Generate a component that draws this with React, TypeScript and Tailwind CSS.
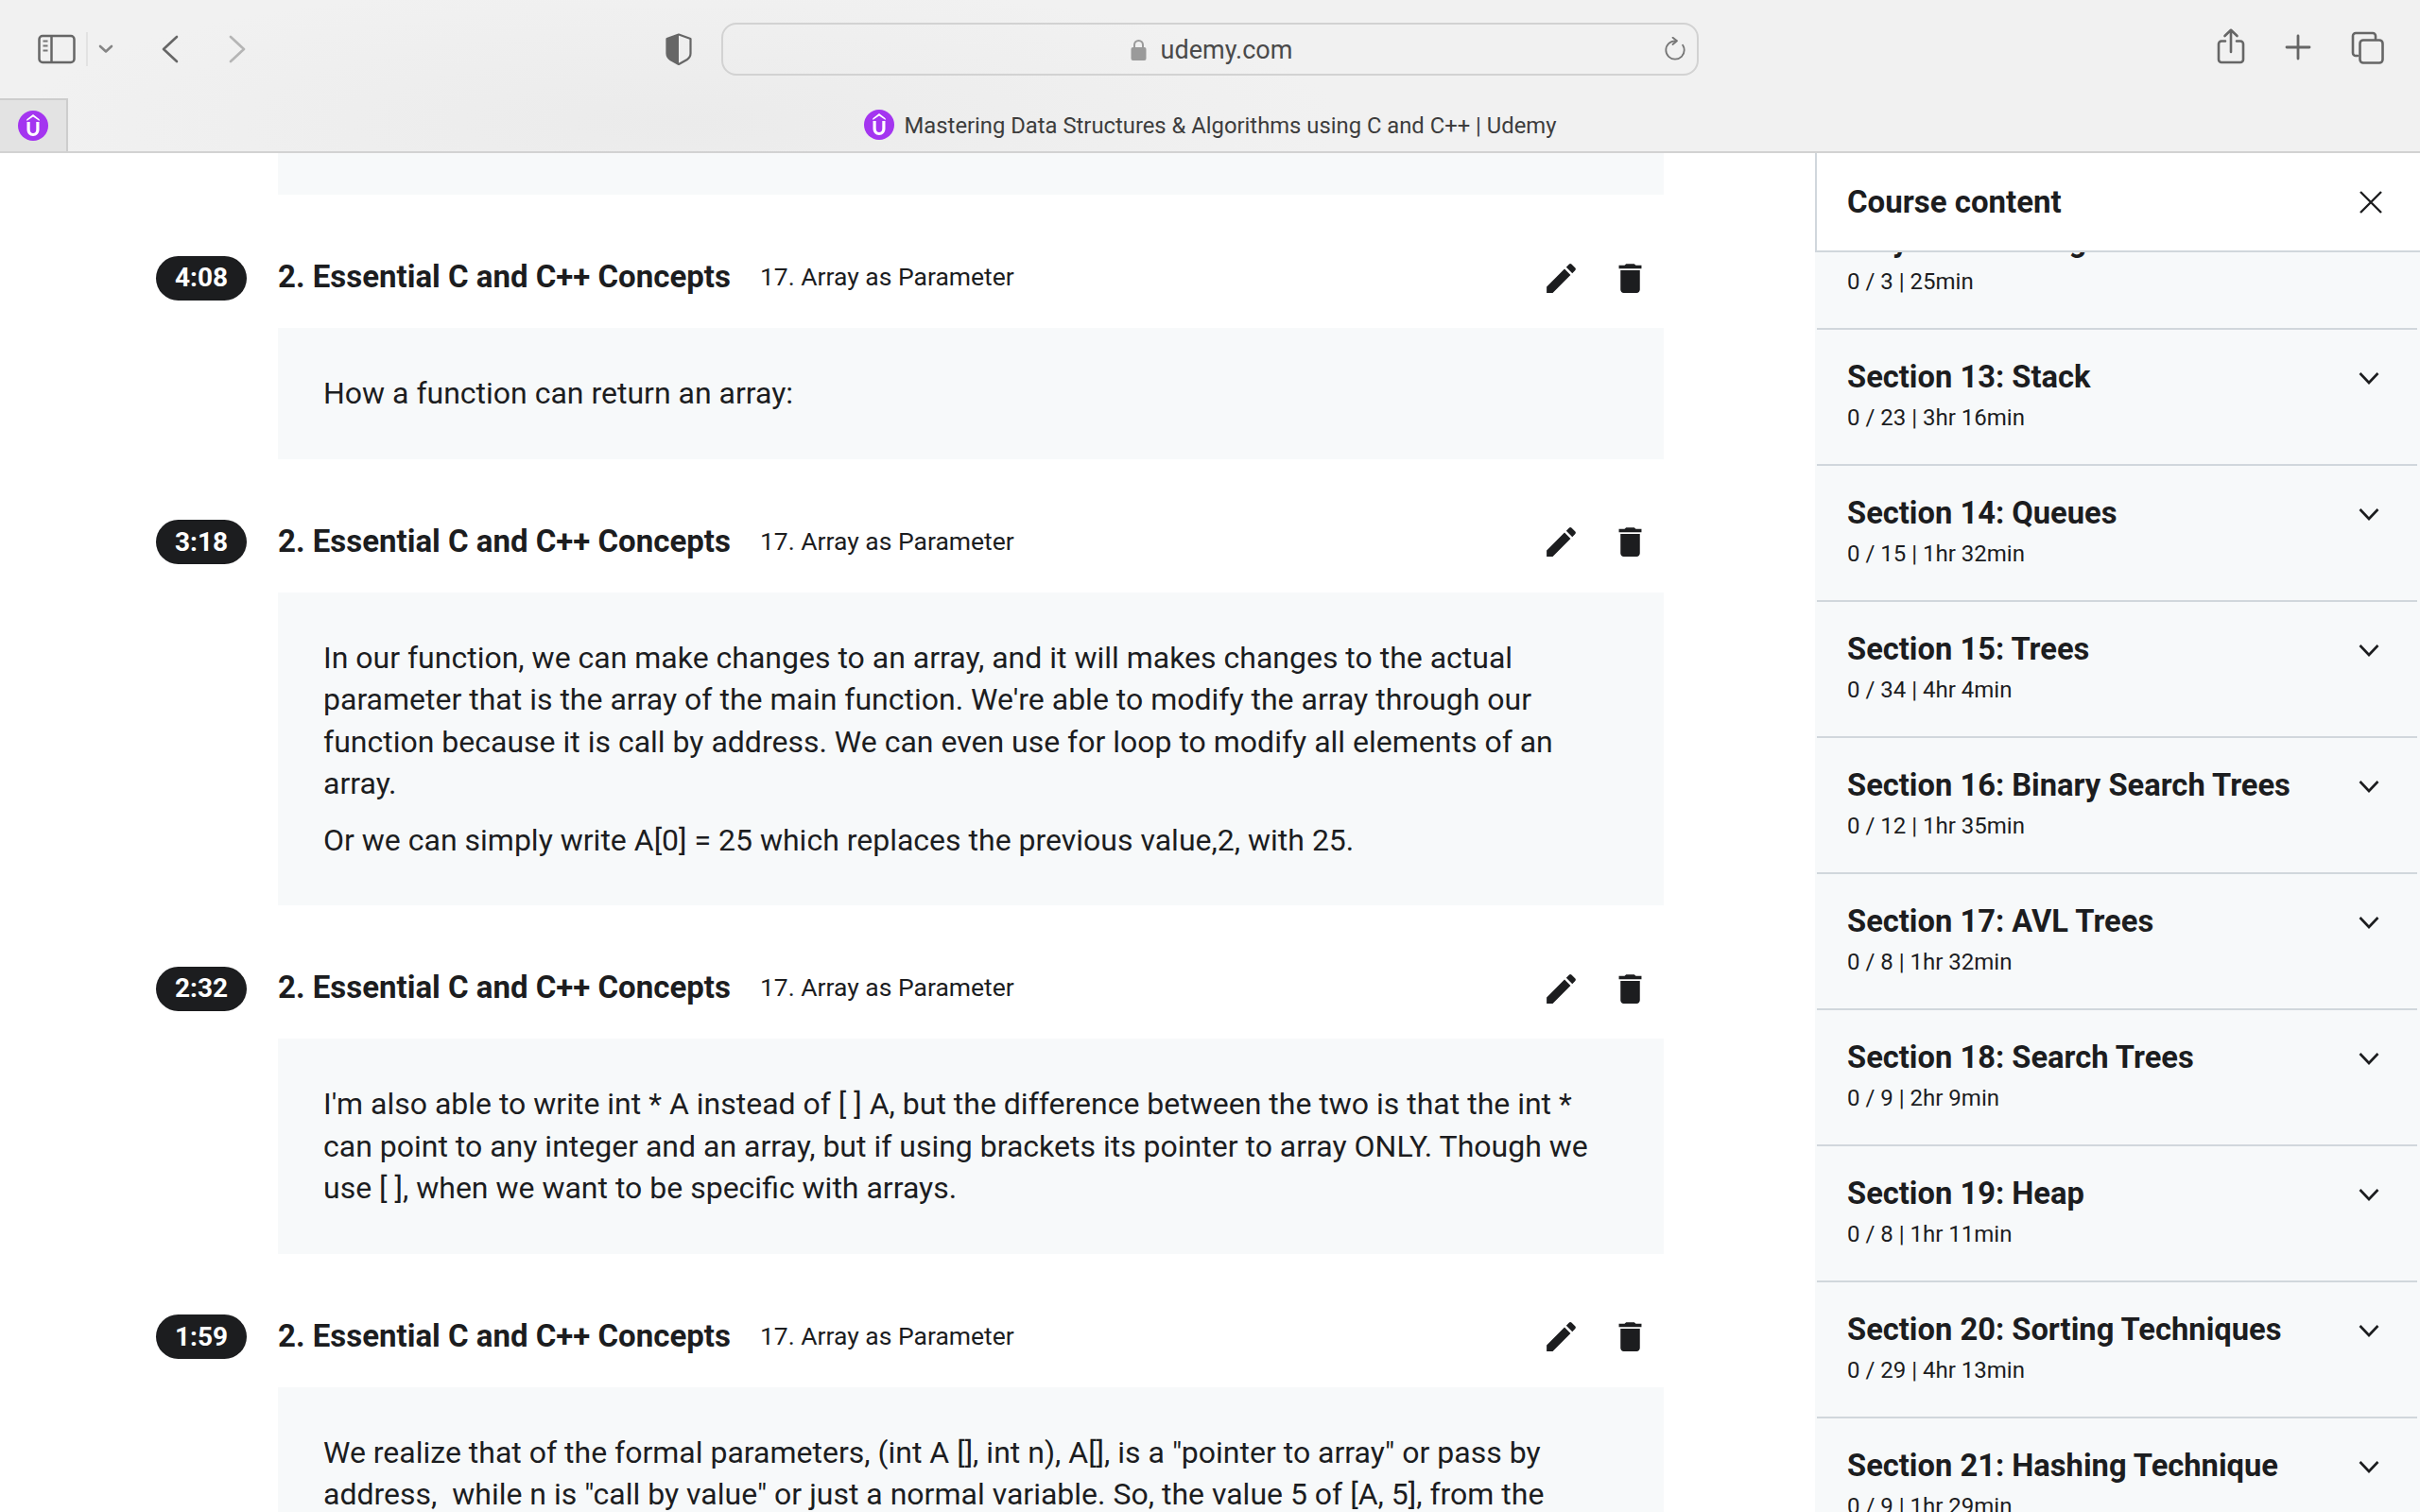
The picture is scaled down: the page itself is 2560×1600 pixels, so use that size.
const textFont = "font-['Roboto','Liberation_Sans',sans-serif]";

const notes = [
  {
    time: '4:08',
    paragraphs: ['How a function can return an array:'],
  },
  {
    time: '3:18',
    paragraphs: [
      "In our function, we can make changes to an array, and it will makes changes to the actual parameter that is the array of the main function. We're able to modify the array through our function because it is call by address. We can even use for loop to modify all elements of an array.",
      'Or we can simply write A[0] = 25 which replaces the previous value,2, with 25.',
    ],
  },
  {
    time: '2:32',
    paragraphs: [
      "I'm also able to write int * A instead of [ ] A, but the difference between the two is that the int * can point to any integer and an array, but if using brackets its pointer to array ONLY. Though we use [ ], when we want to be specific with arrays.",
    ],
  },
  {
    time: '1:59',
    paragraphs: [
      'We realize that of the formal parameters, (int A [], int n), A[], is a "pointer to array" or pass by\naddress,\u00a0 while n is "call by value" or just a normal variable. So, the value 5 of [A, 5], from the\nmain function is copied into n of the function.',
    ],
  },
];

const sections = [
  { title: 'Section 13: Stack', meta: '0 / 23 | 3hr 16min' },
  { title: 'Section 14: Queues', meta: '0 / 15 | 1hr 32min' },
  { title: 'Section 15: Trees', meta: '0 / 34 | 4hr 4min' },
  { title: 'Section 16: Binary Search Trees', meta: '0 / 12 | 1hr 35min' },
  { title: 'Section 17: AVL Trees', meta: '0 / 8 | 1hr 32min' },
  { title: 'Section 18: Search Trees', meta: '0 / 9 | 2hr 9min' },
  { title: 'Section 19: Heap', meta: '0 / 8 | 1hr 11min' },
  { title: 'Section 20: Sorting Techniques', meta: '0 / 29 | 4hr 13min' },
  { title: 'Section 21: Hashing Technique', meta: '0 / 9 | 1hr 29min' },
];

function Favicon() {
  return (
    <svg width="32" height="32" viewBox="0 0 32 32" className="shrink-0">
      <circle cx="16" cy="16" r="16" fill="#a435f0" />
      <path d="M9.3 9.200 16 4l6.700 5.200v1.800L16 6.600l-6.700 4.400z" fill="#fff" />
      <path d="M9.500 12v8c0 4 2.700 7 6.500 7s6.500-3 6.500-7v-8h-3.200v8c0 2.400-1.300 4-3.300 4s-3.300-1.600-3.300-4v-8z" fill="#fff" />
    </svg>
  );
}

function BrowserChrome() {
  return (
    <header className="h-[162px] shrink-0 border-b-2 border-[#d2d2d2] bg-[radial-gradient(ellipse_700px_150px_at_720px_130px,#ebebeb,#f1f1f1)]">
      <div className="flex h-[104px] items-start pt-[24px]">
        <div className="flex h-[56px] w-[763px] shrink-0 items-center">
          <svg width="40" height="32" viewBox="0 0 40 32" fill="none" className="ml-[40px]">
            <rect x="1.500" y="2" width="37" height="28" rx="3.500" stroke="#666" strokeWidth="2.500" />
            <path d="M14.500 2v28" stroke="#666" strokeWidth="2.500" />
            <path d="M5.500 7.500h5M5.500 12.500h5M5.500 17.500h5" stroke="#777" strokeWidth="2" />
          </svg>
          <div className="ml-[11px] h-[36px] w-[2px] bg-[#e2e2e2]" />
          <svg width="16" height="10" viewBox="0 0 16 10" fill="none" className="ml-[11px]">
            <path d="M2 2l6 5.500L14 2" stroke="#858585" strokeWidth="2.600" strokeLinecap="round" strokeLinejoin="round" />
          </svg>
          <svg width="20" height="30" viewBox="0 0 20 30" fill="none" className="ml-[50px]">
            <path d="M17 2 3 15l14 13" stroke="#666" strokeWidth="2.600" strokeLinecap="round" strokeLinejoin="round" />
          </svg>
          <svg width="20" height="30" viewBox="0 0 20 30" fill="none" className="ml-[51px]">
            <path d="M3 2l14 13L3 28" stroke="#b5b5b5" strokeWidth="2.600" strokeLinecap="round" strokeLinejoin="round" />
          </svg>
          <svg width="28" height="34" viewBox="0 0 28 34" fill="none" className="ml-[443px]">
            <path d="M14 1.500 26.500 6v15.500c0 3-1.500 5-4 6.800L14 33l-8.500-4.700c-2.500-1.800-4-3.800-4-6.800V6z" stroke="#666" strokeWidth="2.200" strokeLinejoin="round" />
            <path d="M14 1.500V33l-8.500-4.700c-2.500-1.800-4-3.800-4-6.800V6z" fill="#666" />
          </svg>
        </div>
        <div className="relative flex h-[56px] w-[1034px] shrink-0 items-center justify-center rounded-[16px] border-2 border-[#d2d2d2] pl-[3px]">
          <svg width="17" height="23" viewBox="0 0 17 23" fill="none">
            <path d="M4 10V6.500a4.500 4.500 0 0 1 9 0V10" stroke="#9a9a9a" strokeWidth="2" />
            <rect x="0.500" y="9" width="16" height="14" rx="2" fill="#9a9a9a" />
          </svg>
          <span className="ml-[15px] pt-[1px] text-[27px] leading-[32px] text-[#4a4a4a]">udemy.com</span>
          <svg width="24" height="25" viewBox="0 0 24 25" fill="none" className="absolute right-[11px] top-[13px]">
            <path d="M12 4.300a9.700 9.700 0 1 0 9.700 9.700c0-2-.6-3.800-1.600-5.300" stroke="#757575" strokeWidth="1.800" strokeLinecap="round" />
            <path d="M9.500.8l4.500 3.500-4.500 3.700" stroke="#757575" strokeWidth="1.800" strokeLinecap="round" strokeLinejoin="round" />
          </svg>
        </div>
        <div className="flex h-[56px] flex-1 items-center">
          <svg width="30" height="38" viewBox="0 0 30 38" fill="none" className="ml-[548px] -translate-y-[3px]">
            <path d="M9 13.500H5a3 3 0 0 0-3 3V33a3 3 0 0 0 3 3h20a3 3 0 0 0 3-3V16.500a3 3 0 0 0-3-3h-4" stroke="#666" strokeWidth="2.600" strokeLinecap="round" />
            <path d="M15 25V2M8.500 8 15 1.800 21.500 8" stroke="#666" strokeWidth="2.600" strokeLinecap="round" strokeLinejoin="round" />
          </svg>
          <svg width="28" height="28" viewBox="0 0 28 28" fill="none" className="ml-[42px] -translate-y-[2px]">
            <path d="M14 2v24M2 14h24" stroke="#666" strokeWidth="2.800" strokeLinecap="round" />
          </svg>
          <svg width="36" height="36" viewBox="0 0 36 36" fill="none" className="ml-[42px] -translate-y-[1px]">
            <path d="M7 26H5a3 3 0 0 1-3-3V5a3 3 0 0 1 3-3h18a3 3 0 0 1 3 3v3" stroke="#666" strokeWidth="2.600" strokeLinecap="round" />
            <rect x="9.500" y="9.500" width="24" height="24" rx="3.500" stroke="#666" strokeWidth="2.600" />
          </svg>
        </div>
      </div>
      <div className="relative flex h-[56px] items-center justify-center">
        <div className="absolute left-0 top-0 flex h-[56px] w-[72px] items-center justify-center border-r-2 border-t-2 border-[#cdcdcd] bg-[#e3e3e3]">
          <Favicon />
        </div>
        <Favicon />
        <span className="ml-[11px] pt-[2px] text-[23.800px] leading-[30px] text-[#3d3d3d]">
          Mastering Data Structures &amp; Algorithms using C and C++ | Udemy
        </span>
      </div>
    </header>
  );
}

function NoteHeader({ time }: { time: string }) {
  return (
    <div className="flex h-[141px] items-center pt-[35px]">
      <span className="-ml-[2px] flex h-[47px] w-[96px] shrink-0 items-center justify-center rounded-full bg-[#1c1d1f] text-[28px] font-bold text-white">
        {time}
      </span>
      <span className="ml-[33px] pb-[2px] text-[33px] font-bold">2. Essential C and C++ Concepts</span>
      <span className="ml-[31px] pb-[2px] text-[26.500px]">17. Array as Parameter</span>
      <div className="ml-auto flex items-center gap-[32px] pr-[15px]">
        <svg width="41" height="41" viewBox="0 0 24 24" fill="#1c1d1f">
          <path d="M3 17.250V21h3.750L17.810 9.940l-3.750-3.750L3 17.250zM20.710 7.040c.39-.39.39-1.020 0-1.410l-2.340-2.340c-.39-.39-1.020-.39-1.410 0l-1.830 1.830 3.750 3.750 1.830-1.830z" />
        </svg>
        <svg width="41" height="41" viewBox="0 0 24 24" fill="#1c1d1f">
          <path d="M6 19c0 1.100.9 2 2 2h8c1.100 0 2-.9 2-2V7H6v12zM19 4h-3.500l-1-1h-5l-1 1H5v2h14V4z" />
        </svg>
      </div>
    </div>
  );
}

function NotesColumn() {
  return (
    <main className="h-full w-[1920px] shrink-0 overflow-hidden pl-[167px] pr-[160px]">
      <div className="ml-[127px] h-[44px] bg-[#f7f9fa]" />
      {notes.map((note) => (
        <section key={note.time}>
          <NoteHeader time={note.time} />
          <div className="ml-[127px] flex flex-col gap-[15px] bg-[#f7f9fa] px-[48px] py-[47px] text-[32px] leading-[44.500px]">
            {note.paragraphs.map((text) => (
              <p key={text} className="whitespace-pre-line">{text}</p>
            ))}
          </div>
        </section>
      ))}
    </main>
  );
}

function SectionRow({ title, meta }: { title: string; meta: string }) {
  return (
    <div className="flex h-[144px] items-start justify-between border-t-2 border-[#d1d7dc] pl-[32px] pr-[39px] pt-[30px]">
      <div>
        <div className="text-[32.700px] font-bold leading-[40px]">{title}</div>
        <div className="mt-[5px] text-[24px] leading-[36px]">{meta}</div>
      </div>
      <svg width="24" height="24" viewBox="0 0 24 24" fill="none" className="mt-[10px] shrink-0">
        <path d="M2.500 6 12 16l9.500-10" stroke="#1c1d1f" strokeWidth="2.600" />
      </svg>
    </div>
  );
}

function Sidebar() {
  return (
    <aside className="flex h-full w-[640px] shrink-0 flex-col overflow-hidden bg-[#f7f9fa]">
      <div className="z-10 flex h-[105px] shrink-0 items-center justify-between border-b-2 border-l-2 border-[#d1d7dc] bg-white pl-[32px] pr-[40px]">
        <span className="text-[33px] font-bold">Course content</span>
        <svg width="24" height="24" viewBox="0 0 24 24" fill="none">
          <path d="M1 1l22 22M23 1 1 23" stroke="#1c1d1f" strokeWidth="2.400" />
        </svg>
      </div>
      <div className="ml-[2px] mr-[3px]">
        <div className="flow-root h-[80px] pl-[32px]">
          <div className="-mt-[32px] text-[32.700px] font-bold leading-[40px]">Polynomial using</div>
          <div className="mt-[5px] text-[24px] leading-[36px]">0 / 3 | 25min</div>
        </div>
        {sections.map((section) => (
          <SectionRow key={section.title} title={section.title} meta={section.meta} />
        ))}
      </div>
    </aside>
  );
}

export default function App() {
  return (
    <div className={`${textFont} flex h-[1600px] w-[2560px] flex-col overflow-hidden bg-white text-[#1c1d1f]`}>
      <BrowserChrome />
      <div className="flex min-h-0 flex-1">
        <NotesColumn />
        <Sidebar />
      </div>
    </div>
  );
}
